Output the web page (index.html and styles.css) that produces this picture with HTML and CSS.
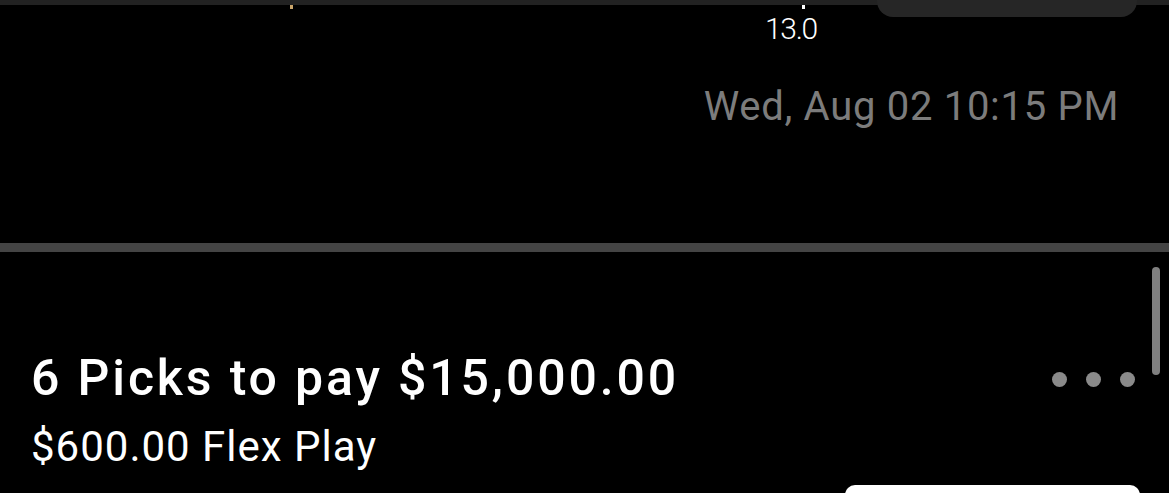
FILE: index.html
```html
<!DOCTYPE html>
<html lang="en">
<head>
    <meta charset="UTF-8">
    <meta name="viewport" content="width=device-width, initial-scale=1.0">
    <title>Entry</title>
    <link rel="stylesheet" href="styles.css">
</head>
<body>
    <section class="game">
        <div class="topbar"></div>
        <div class="pill"></div>
        <div class="chart">
            <span class="tick tick-gold" style="left: 290px"></span>
            <span class="tick" style="left: 802px"></span>
            <span class="chart-label" style="left: 765px">13.0</span>
        </div>
        <div class="game-time">Wed, Aug 02 10:15 PM</div>
    </section>
    <div class="divider"></div>
    <main class="entry">
        <div class="scrollbar"></div>
        <div class="entry-head">
            <div>
                <h1 class="entry-title">6 Picks to pay $15,000.00</h1>
                <p class="entry-sub">$600.00 Flex Play</p>
            </div>
            <div class="more">
                <span></span><span></span><span></span>
            </div>
        </div>
        <button class="share-btn" type="button"></button>
    </main>
</body>
</html>
```

FILE: styles.css
```css
html,
body {
    height: 100%;
    overflow: hidden;
}

body {
    font-family: Roboto, "Noto Sans", sans-serif;
    margin: 0;
    padding: 0;
    background-color: #000;
    color: #fff;
}

.game {
    position: relative;
    height: 243px;
    display: flex;
    flex-direction: column;
}

.topbar {
    height: 5px;
    background-color: #222;
}

.pill {
    position: absolute;
    top: 0;
    left: 877px;
    width: 260px;
    height: 17px;
    background-color: #262626;
    border-radius: 0 0 16px 16px;
}

.chart {
    position: relative;
    height: 40px;
}

.tick {
    position: absolute;
    top: 0;
    width: 3px;
    height: 4px;
    background-color: #fff;
}

.tick-gold {
    background-color: #c9a46a;
}

.chart-label {
    position: absolute;
    top: 9px;
    font-size: 30px;
    font-weight: 300;
    letter-spacing: -1.3px;
    line-height: 1;
}

.game-time {
    text-align: right;
    padding-right: 50px;
    margin-top: 38px;
    font-size: 40px;
    color: #7c7c7c;
    letter-spacing: 0.7px;
}

.divider {
    height: 9px;
    background-color: #444;
}

.entry {
    position: relative;
    height: 241px;
    overflow: hidden;
    padding: 0 0 0 31px;
}

.scrollbar {
    position: absolute;
    right: 9px;
    top: 15px;
    width: 8px;
    height: 108px;
    background-color: #808080;
    border-radius: 4px;
}

.entry-head {
    display: flex;
    align-items: flex-start;
    justify-content: space-between;
    padding-top: 96px;
    padding-right: 34px;
}

.entry-title {
    margin: 0;
    font-size: 50px;
    font-weight: 500;
    letter-spacing: 2.85px;
    line-height: 1.2;
}

.entry-sub {
    margin: 14px 0 0;
    font-size: 42px;
    letter-spacing: 1px;
    line-height: 1.2;
}

.more {
    display: flex;
    gap: 19px;
    margin-top: 24px;
}

.more span {
    width: 15px;
    height: 15px;
    border-radius: 50%;
    background-color: #8a8a8a;
}

.share-btn {
    display: block;
    margin: 13px 29px 0 auto;
    width: 295px;
    height: 40px;
    border: none;
    border-radius: 10px;
    background-color: #fff;
}
```
